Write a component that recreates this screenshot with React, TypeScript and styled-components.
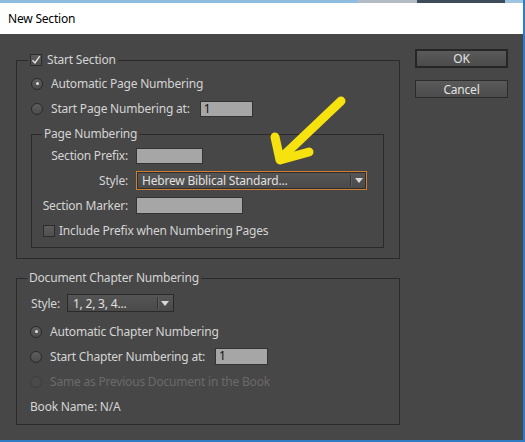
import React from 'react';
import styled, { createGlobalStyle } from 'styled-components';

const GlobalStyle = createGlobalStyle`
  html, body {
    margin: 0;
    padding: 0;
    background: #2f7cc4;
  }
  body {
    font-family: "Noto Sans", "Open Sans", sans-serif;
    font-size: 12px;
    letter-spacing: -0.2px;
  }
`;

const Window = styled.div`
  width: 523px;
  height: 440px;
  display: flex;
  flex-direction: column;
`;

const Strip = styled.div`
  height: 3px;
  background: linear-gradient(
    90deg,
    #8fbde0 0 358px,
    #b3bcc4 358px 417px,
    #3d4b5b 417px 505px,
    #9ec5e0 505px
  );
`;

const TitleBar = styled.div`
  height: 31px;
  background: #fff;
  color: #000;
  display: flex;
  align-items: center;
  padding-left: 8px;
  font-size: 12px;
`;

const Body = styled.div`
  flex: 1;
  background: #474747;
  display: flex;
  gap: 15px;
  padding: 15px 0 0 16px;
  position: relative;
  color: #d4d4d4;
`;

const LeftCol = styled.div`
  width: 384px;
  margin-top: 4px;
  display: flex;
  flex-direction: column;
  gap: 12px;
`;

const Group = styled.fieldset<{ $pad: string }>`
  margin: 0;
  padding: ${p => p.$pad};
  border: 1px solid #2a2a2a;
  min-width: 0;
`;

const Legend = styled.legend<{ $offset?: number }>`
  margin-left: ${p => p.$offset ?? 0}px;
  padding: 0 2px;
  height: 14px;
  line-height: 14px;
`;

const LegendInner = styled.span`
  display: inline-flex;
  align-items: center;
  gap: 5px;
  height: 14px;
`;

const Row = styled.div<{ $h?: number; $gap?: number }>`
  height: ${p => p.$h ?? 25}px;
  display: flex;
  align-items: center;
  gap: ${p => p.$gap ?? 8}px;
  white-space: nowrap;
`;

const Label = styled.span<{ $w?: number; $disabled?: boolean }>`
  width: ${p => (p.$w ? `${p.$w}px` : 'auto')};
  text-align: right;
  color: ${p => (p.$disabled ? '#6a6a6a' : '#d4d4d4')};
`;

const RadioDot = styled.span<{ $on?: boolean; $disabled?: boolean }>`
  width: 12px;
  height: 12px;
  box-sizing: border-box;
  border-radius: 50%;
  border: 1px solid ${p => (p.$disabled ? '#3e3e3e' : '#2a2a2a')};
  background: ${p =>
    p.$disabled ? '#4a4a4a' : 'linear-gradient(#5e5e5e, #4c4c4c)'};
  display: flex;
  align-items: center;
  justify-content: center;
  flex: none;
  &::after {
    content: '';
    display: ${p => (p.$on ? 'block' : 'none')};
    width: 3px;
    height: 3px;
    border-radius: 50%;
    background: #e0e0e0;
  }
`;

const Check = styled.span`
  width: 12px;
  height: 12px;
  box-sizing: border-box;
  border: 1px solid #2c2c2c;
  background: linear-gradient(#5c5c5c, #505050);
  display: inline-flex;
  align-items: center;
  justify-content: center;
  flex: none;
`;

const TextInput = styled.div<{ $w: number; $h?: number }>`
  width: ${p => p.$w}px;
  height: ${p => p.$h ?? 16}px;
  box-sizing: border-box;
  background: #a6a6a6;
  border: 1px solid #333;
  color: #111;
  font-size: 12px;
  line-height: 14px;
  padding-left: 3px;
  flex: none;
`;

const Select = styled.div<{ $w: number; $h: number; $focus?: boolean }>`
  width: ${p => p.$w}px;
  height: ${p => p.$h}px;
  box-sizing: border-box;
  border: 1px solid ${p => (p.$focus ? '#d07e32' : '#2a2a2a')};
  box-shadow: ${p => (p.$focus ? 'inset 0 0 0 1px #2e2e2e' : 'none')};
  background: linear-gradient(#555, #4a4a4a);
  display: flex;
  align-items: center;
  flex: none;
`;

const SelectText = styled.span`
  flex: 1;
  padding-left: 5px;
  color: #e0e0e0;
`;

const SelectDivider = styled.span`
  width: 1px;
  height: 70%;
  background: #333;
  box-shadow: 1px 0 0 #5e5e5e;
`;

const SelectArrow = styled.span`
  width: 15px;
  display: flex;
  justify-content: center;
  &::after {
    content: '';
    border-left: 4px solid transparent;
    border-right: 4px solid transparent;
    border-top: 5px solid #d8d8d8;
  }
`;

const Inner = styled(Group)`
  margin: 6px 0 0 0;
`;

const RightCol = styled.div`
  display: flex;
  flex-direction: column;
  gap: 12px;
`;

const Button = styled.div<{ $default?: boolean }>`
  width: 93px;
  height: ${p => (p.$default ? 19 : 18)}px;
  box-sizing: border-box;
  border: ${p => (p.$default ? '2px solid #262626' : '1px solid #2c2c2c')};
  background: linear-gradient(#5a5a5a, #4b4b4b);
  color: #e2e2e2;
  display: flex;
  align-items: center;
  justify-content: center;
  font-size: 12px;
`;

const Annotation = styled.svg`
  position: absolute;
  left: 260px;
  top: 46px;
  overflow: visible;
  pointer-events: none;
`;

const Radio = ({ label, on, disabled }: { label: string; on?: boolean; disabled?: boolean }) => (
  <Row>
    <RadioDot $on={on} $disabled={disabled} />
    <Label $disabled={disabled}>{label}</Label>
  </Row>
);

const CheckMark = () => (
  <svg width="10" height="10" viewBox="0 0 10 10">
    <path d="M1.5 5.2 L4 8 L8.8 1.2" fill="none" stroke="#e4e4e4" strokeWidth="1.4" />
  </svg>
);

export default function App() {
  return (
    <>
      <GlobalStyle />
      <Window>
        <Strip />
        <TitleBar>New Section</TitleBar>
        <Body>
          <LeftCol>
            <Group $pad="4px 15px 10px 14px">
              <Legend $offset={-3}>
                <LegendInner>
                  <Check>
                    <CheckMark />
                  </Check>
                  Start Section
                </LegendInner>
              </Legend>
              <Radio label="Automatic Page Numbering" on />
              <Row>
                <RadioDot />
                <Label>Start Page Numbering at:</Label>
                <TextInput $w={53} $h={16} style={{ marginLeft: 2 }}>1</TextInput>
              </Row>
              <Inner $pad="2px 0 4px 10px">
                <Legend $offset={0}>Page Numbering</Legend>
                <Row>
                  <Label $w={86}>Section Prefix:</Label>
                  <TextInput $w={67} $h={16} />
                </Row>
                <Row>
                  <Label $w={86}>Style:</Label>
                  <Select $w={231} $h={19} $focus>
                    <SelectText>Hebrew Biblical Standard...</SelectText>
                    <SelectDivider />
                    <SelectArrow />
                  </Select>
                </Row>
                <Row>
                  <Label $w={86}>Section Marker:</Label>
                  <TextInput $w={107} $h={17} />
                </Row>
                <Row $gap={4} style={{ paddingLeft: 1 }}>
                  <Check />
                  <Label>Include Prefix when Numbering Pages</Label>
                </Row>
              </Inner>
            </Group>

            <Group $pad="4px 15px 5px 13px">
              <Legend $offset={-3}>Document Chapter Numbering</Legend>
              <Row $h={28} $gap={7} style={{ marginBottom: 2, paddingLeft: 1 }}>
                <Label>Style:</Label>
                <Select $w={107} $h={18}>
                  <SelectText>1, 2, 3, 4...</SelectText>
                  <SelectDivider />
                  <SelectArrow />
                </Select>
              </Row>
              <Radio label="Automatic Chapter Numbering" on />
              <Row>
                <RadioDot />
                <Label>Start Chapter Numbering at:</Label>
                <TextInput $w={53} $h={17} style={{ marginLeft: 2 }}>1</TextInput>
              </Row>
              <Radio label="Same as Previous Document in the Book" disabled />
              <Row>
                <Label>Book Name: N/A</Label>
              </Row>
            </Group>
          </LeftCol>

          <RightCol>
            <Button $default>OK</Button>
            <Button>Cancel</Button>
          </RightCol>

          <Annotation width="100" height="100" viewBox="0 0 100 100">
            <g fill="none" stroke="#f6e20f" strokeWidth="9" strokeLinecap="round" strokeLinejoin="round">
              <path d="M81 21 L22 77" />
              <path d="M15 57 L20 80 L49 72" />
            </g>
          </Annotation>
        </Body>
      </Window>
    </>
  );
}
